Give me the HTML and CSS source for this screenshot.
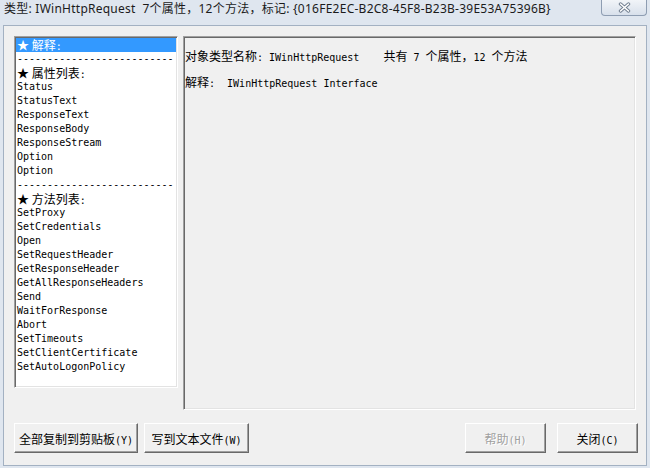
FILE: index.html
```html
<!DOCTYPE html>
<html lang="zh-CN">
  <head>
    <meta charset="UTF-8" />
    <title>类型: IWinHttpRequest</title>
    <link rel="stylesheet" href="styles.css">
  </head>
  <body>
    <div class="window">
      <div class="titlebar">
        <span class="title">类型: IWinHttpRequest&nbsp; 7个属性，12个方法，标记: {016FE2EC-B2C8-45F8-B23B-39E53A75396B}</span>
        <button class="close-btn" type="button">
          <svg width="13" height="11" viewBox="0 0 13 11">
            <path d="M2.5 2 L10.5 9 M10.5 2 L2.5 9" stroke="#6f7d8f" stroke-width="3.4" stroke-linecap="round" fill="none" />
            <path d="M2.5 2 L10.5 9 M10.5 2 L2.5 9" stroke="#ffffff" stroke-width="1.6" stroke-linecap="round" fill="none" />
          </svg>
        </button>
      </div>

      <div class="client">
        <div class="panes">
          <ul class="member-list">
            <li class="selected"><span class="cn">★ 解释</span>:</li>
            <li>--------------------------</li>
            <li><span class="cn">★ 属性列表</span>:</li>
            <li>Status</li>
            <li>StatusText</li>
            <li>ResponseText</li>
            <li>ResponseBody</li>
            <li>ResponseStream</li>
            <li>Option</li>
            <li>Option</li>
            <li>--------------------------</li>
            <li><span class="cn">★ 方法列表</span>:</li>
            <li>SetProxy</li>
            <li>SetCredentials</li>
            <li>Open</li>
            <li>SetRequestHeader</li>
            <li>GetResponseHeader</li>
            <li>GetAllResponseHeaders</li>
            <li>Send</li>
            <li>WaitForResponse</li>
            <li>Abort</li>
            <li>SetTimeouts</li>
            <li>SetClientCertificate</li>
            <li>SetAutoLogonPolicy</li>
          </ul>

          <div class="detail">
            <p><span class="cn">对象类型名称</span>: IWinHttpRequest    <span class="cn">共有</span> 7 <span class="cn">个属性，</span>12 <span class="cn">个方法</span></p>
            <p><span class="cn">解释</span>:  IWinHttpRequest Interface</p>
          </div>
        </div>

        <div class="actions">
          <div class="btn-group">
            <button class="btn btn-copy" type="button">全部复制到剪贴板<span class="key">(Y)</span></button>
            <button class="btn btn-save" type="button">写到文本文件<span class="key">(W)</span></button>
          </div>
          <div class="btn-group right">
            <button class="btn" type="button" disabled>帮助<span class="key">(H)</span></button>
            <button class="btn" type="button">关闭<span class="key">(C)</span></button>
          </div>
        </div>
      </div>
    </div>
  </body>
</html>
```

FILE: styles.css
```css
* {
  margin: 0;
  padding: 0;
  box-sizing: border-box;
}

body {
  width: 650px;
  height: 468px;
  overflow: hidden;
  background: #dfe6ef;
  font-family: "Noto Sans", "Noto Sans CJK SC", sans-serif;
  font-size: 12px;
  color: #000;
}

.window {
  display: flex;
  flex-direction: column;
  height: 468px;
}

/* title bar */
.titlebar {
  height: 25px;
  display: flex;
  justify-content: space-between;
  align-items: flex-start;
  padding-left: 4px;
}

.title {
  line-height: 18px;
  color: #1b1b1b;
  letter-spacing: 0.25px;
  white-space: pre;
}

.close-btn {
  width: 46px;
  height: 16px;
  margin-right: 3px;
  border: 1px solid #8e9db2;
  border-top: none;
  border-radius: 0 0 4px 4px;
  background: linear-gradient(#f1f4f8, #d8e0eb);
  display: flex;
  align-items: center;
  justify-content: center;
}

/* client area */
.client {
  flex: 1;
  margin: 0 3px 2px 3px;
  border: 1px solid #a3b1c2;
  background: #f0f0f0;
  padding: 10px 8px 0 10px;
  display: flex;
  flex-direction: column;
}

.panes {
  display: flex;
  gap: 5px;
  align-items: flex-start;
}

.cn {
  font-family: "Noto Sans CJK SC", sans-serif;
  font-size: 12px;
  letter-spacing: 0;
}

.member-list {
  list-style: none;
  width: 164px;
  height: 352px;
  padding: 1px;
  background: #fff;
  border: 1px solid;
  border-color: #a0a0a0 #fff #fff #a0a0a0;
  box-shadow: inset 1px 1px 0 #696969, inset -1px -1px 0 #e3e3e3;
  font-family: "DejaVu Sans Mono", "Noto Sans CJK SC", monospace;
  font-size: 10px;
}

.member-list li {
  height: 14px;
  line-height: 14px;
  padding-left: 1px;
  white-space: pre;
}

.member-list li.selected {
  background: #3399ff;
  color: #fff;
}

.detail {
  width: 453px;
  height: 374px;
  padding-top: 7px;
  border: 1px solid;
  border-color: #a0a0a0 #fff #fff #a0a0a0;
  box-shadow: inset 1px 1px 0 #696969, inset -1px -1px 0 #e3e3e3;
  font-family: "DejaVu Sans Mono", "Noto Sans CJK SC", monospace;
  font-size: 10px;
}

.detail p {
  line-height: 24px;
  padding-left: 1px;
  white-space: pre;
}

/* buttons */
.actions {
  display: flex;
  justify-content: space-between;
  margin-top: 13px;
}

.btn-group {
  display: flex;
  gap: 6px;
}

.btn-group.right {
  gap: 11px;
}

.btn {
  height: 30px;
  padding: 0;
  background: #f0f0f0;
  border: 1px solid;
  border-color: #fff #696969 #696969 #fff;
  box-shadow: inset -1px -1px 0 #a0a0a0;
  font-family: "Noto Sans CJK SC", sans-serif;
  font-size: 12px;
  color: #000;
  white-space: nowrap;
}

.btn-copy {
  width: 124px;
}

.btn-save {
  width: 105px;
}

.btn-group.right .btn {
  width: 81px;
}

.btn:disabled {
  color: #a0a0a0;
  text-shadow: 1px 1px 0 #fff;
}

.key {
  font-family: "DejaVu Sans Mono", monospace;
  font-size: 10px;
}
```
